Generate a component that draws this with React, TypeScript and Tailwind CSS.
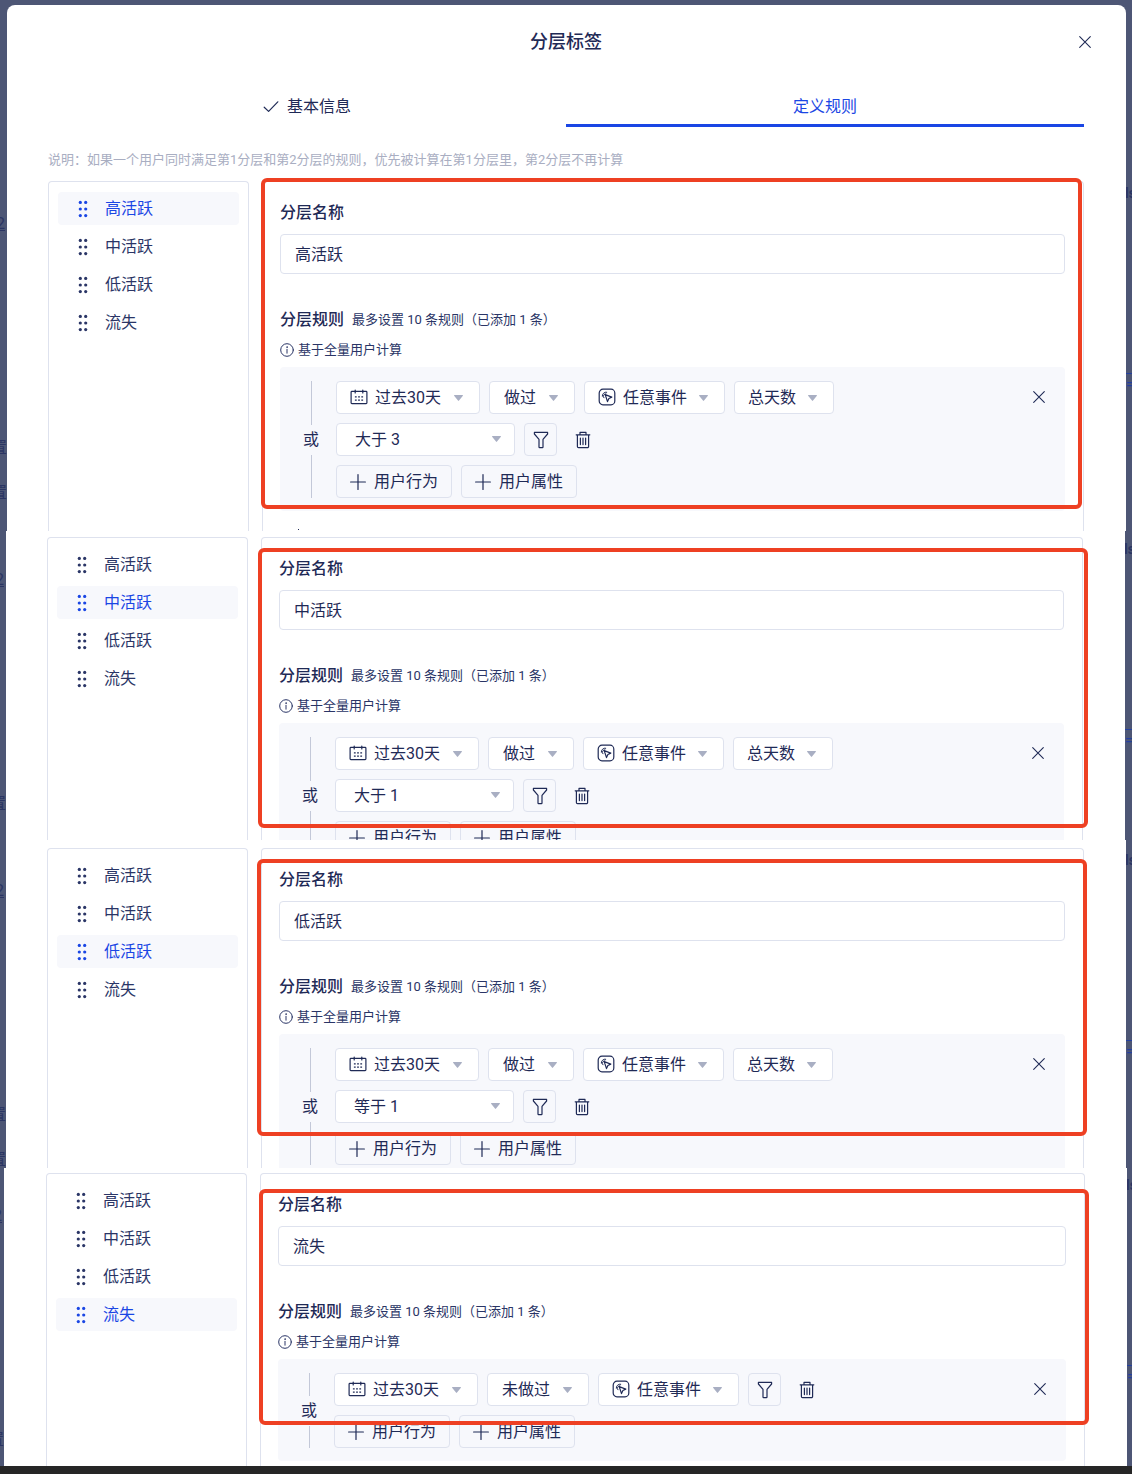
import React from "react";

type IconProps = { className?: string };

const strokeProps = {
  fill: "none",
  stroke: "currentColor",
  strokeLinecap: "round" as const,
  strokeLinejoin: "round" as const,
};

const CloseIcon = ({ className }: IconProps) => (
  <svg viewBox="0 0 14 14" className={className} {...strokeProps} strokeWidth="1.1" aria-hidden="true">
    <path d="M1.7 1.7l10.6 10.6M12.3 1.7L1.7 12.3" />
  </svg>
);

const CheckIcon = ({ className }: IconProps) => (
  <svg viewBox="0 0 16 16" className={className} {...strokeProps} strokeWidth="1.2" aria-hidden="true">
    <path d="M1.2 8.2l4.4 4.2L14.8 2.8" />
  </svg>
);

const DragIcon = ({ className }: IconProps) => (
  <svg viewBox="0 0 10 18" className={className} fill="currentColor" aria-hidden="true">
    {[2.4, 9, 15.6].map((y) => (
      <g key={y}>
        <circle cx="2.3" cy={y} r="1.6" />
        <circle cx="7.7" cy={y} r="1.6" />
      </g>
    ))}
  </svg>
);

const InfoIcon = ({ className }: IconProps) => (
  <svg viewBox="0 0 14 14" className={className} {...strokeProps} strokeWidth="1" aria-hidden="true">
    <circle cx="7" cy="7" r="6.3" />
    <path d="M7 6.3v3.9" />
    <circle cx="7" cy="4.1" r="0.3" />
  </svg>
);

const CalendarIcon = ({ className }: IconProps) => (
  <svg viewBox="0 0 18 18" className={className} {...strokeProps} strokeWidth="1.2" aria-hidden="true">
    <rect x="1.1" y="3.4" width="15.8" height="12.2" rx="0.8" />
    <path d="M5.2 2v3M12.8 2v3" />
    <path strokeLinecap="butt" strokeDasharray="1.8 1.4" d="M4.9 8.9h8.2M4.9 12.2h8.2" />
  </svg>
);

const EventIcon = ({ className }: IconProps) => (
  <svg viewBox="0 0 18 18" className={className} {...strokeProps} strokeWidth="1.2" aria-hidden="true">
    <rect x="1.2" y="1.2" width="15.6" height="15.6" rx="3.8" />
    <path d="M7.2 6.6l6.6 2.5-2.9 1.4-1.4 3.1z" />
    <path d="M4.3 8.2a3.6 3.6 0 0 1 4.4-4M5.9 9.8a2.3 2.3 0 0 1-.2-2.6 2.3 2.3 0 0 1 2.2-1.4" strokeWidth="1" />
  </svg>
);

const FilterIcon = ({ className }: IconProps) => (
  <svg viewBox="0 0 18 18" className={className} {...strokeProps} strokeWidth="1.2" aria-hidden="true">
    <path d="M2.4 1.4h13.2v1.6L11 8.4v7.6a.6.6 0 0 1-.6.6H7.6a.6.6 0 0 1-.6-.6V8.4L2.4 3z" />
  </svg>
);

const TrashIcon = ({ className }: IconProps) => (
  <svg viewBox="0 0 18 18" className={className} {...strokeProps} strokeWidth="1.2" aria-hidden="true">
    <path d="M2.2 3.8h13.6M6 3.6V1.4h6v2.2M3.4 4v11.4a1.2 1.2 0 0 0 1.2 1.2h8.8a1.2 1.2 0 0 0 1.2-1.2V4M6.4 7v6.6M9 7v6.6M11.6 7v6.6" />
  </svg>
);

const PlusIcon = ({ className }: IconProps) => (
  <svg viewBox="0 0 16 16" className={className} {...strokeProps} strokeWidth="1.2" aria-hidden="true">
    <path d="M8 .6v14.8M.6 8h14.8" />
  </svg>
);

const CaretIcon = ({ className }: IconProps) => (
  <svg viewBox="0 0 9 6" className={className} fill="currentColor" aria-hidden="true">
    <path d="M.7 0h7.6a.5.5 0 0 1 .4.9L5 5.6a.6.6 0 0 1-1 0L.3.9A.5.5 0 0 1 .7 0z" />
  </svg>
);

type DropdownProps = {
  label: string;
  value: string;
  width: string;
  textPad: string;
  caret?: string;
  icon?: React.ReactNode;
};

function Dropdown({ label, value, width, textPad, caret = "top-[14px] right-[17px]", icon }: DropdownProps) {
  return (
    <div className={`relative ${width}`}>
      {icon && <span className="pointer-events-none absolute top-[7px] left-[14px]">{icon}</span>}
      <select
        aria-label={label}
        defaultValue={value}
        className={`h-[33px] w-full appearance-none rounded border border-[#dee2ee] bg-white pr-0 text-base leading-6 ${textPad}`}
      >
        <option>{value}</option>
      </select>
      <CaretIcon className={`pointer-events-none absolute h-[6px] w-[9px] text-[#a9afc3] ${caret}`} />
    </div>
  );
}

const FilterButton = () => (
  <button type="button" aria-label="筛选" className="flex size-[33px] items-center justify-center rounded border border-[#dee2ee]">
    <FilterIcon className="size-[18px]" />
  </button>
);

const TrashButton = () => (
  <button type="button" aria-label="删除" className="flex size-[33px] items-center justify-center">
    <TrashIcon className="size-[18px]" />
  </button>
);

const AddButton = ({ children }: { children: React.ReactNode }) => (
  <button type="button" className="flex h-[33px] items-center gap-2 rounded border border-[#dee2ee] px-[13px] text-base leading-6">
    <PlusIcon className="size-4" />
    {children}
  </button>
);

const levels = ["高活跃", "中活跃", "低活跃", "流失"];

type Level = { name: string; done: string; compare?: string };

function LevelList({ active }: { active: string }) {
  return (
    <nav aria-label="分层" className="w-[201px] shrink-0 rounded-t border border-b-0 border-[#dee2ee] px-[9px] pt-[10px]">
      <ul className="flex flex-col gap-[5px]">
        {levels.map((l) => (
          <li key={l}>
            <button
              type="button"
              className={`flex h-[33px] w-full items-center gap-[17px] rounded pl-5 text-base leading-6 ${
                l === active ? "bg-[#f7f8fc] text-[#1a46e4]" : "text-[#2a3566]"
              }`}
            >
              <DragIcon className="h-[18px] w-[10px]" />
              {l}
            </button>
          </li>
        ))}
      </ul>
    </nav>
  );
}

function RuleBox({ level }: { level: Level }) {
  return (
    <div className="mt-[7px] flex rounded bg-[#f7f8fc] pt-[14px] pr-[19px] pb-[13px] pl-[23px]">
      <div className="mr-[17px] flex w-4 flex-col items-center">
        <span className="w-px flex-1 bg-[#c3c8d8]" />
        <span className="py-[3px] text-base leading-6">或</span>
        <span className="w-px flex-1 bg-[#c3c8d8]" />
      </div>
      <div className="flex flex-1 flex-col gap-[9px]">
        <div className="flex gap-[9px]">
          <Dropdown label="时间范围" value="过去30天" width="w-36" textPad="pl-[38px]" icon={<CalendarIcon className="size-[18px]" />} />
          <Dropdown label="是否做过" value={level.done} width={level.compare ? "w-[86px]" : "w-[102px]"} textPad="pl-[14px]" />
          <Dropdown label="事件" value="任意事件" width="w-[141px]" textPad="pl-[38px]" icon={<EventIcon className="size-[18px]" />} />
          {level.compare ? (
            <Dropdown label="指标" value="总天数" width="w-[100px]" textPad="pl-[13px]" />
          ) : (
            <>
              <FilterButton />
              <TrashButton />
            </>
          )}
        </div>
        {level.compare && (
          <div className="flex gap-[9px]">
            <Dropdown label="比较" value={level.compare} width="w-[179px]" textPad="pl-[18px]" caret="top-[13px] right-[14px]" />
            <FilterButton />
            <TrashButton />
          </div>
        )}
        <div className="flex gap-[9px]">
          <AddButton>用户行为</AddButton>
          <AddButton>用户属性</AddButton>
        </div>
      </div>
      <button type="button" aria-label="移除规则" className="mt-[9px] flex size-[14px] items-center justify-center self-start">
        <CloseIcon className="size-[14px]" />
      </button>
    </div>
  );
}

function LevelPanels({ level, frame, tail }: { level: Level; frame: string; tail?: boolean }) {
  const id = `name-${level.name}`;
  return (
    <div className="flex flex-1 gap-[13px]">
      <LevelList active={level.name} />
      <section className="relative flex-1 rounded-t border border-b-0 border-[#dee2ee] pt-[19px] pr-[18px] pl-[17px]">
        <label htmlFor={id} className="block text-base leading-6 font-medium">
          分层名称
        </label>
        <input
          id={id}
          defaultValue={level.name}
          className="mt-[9px] block h-10 w-full rounded border border-[#dee2ee] bg-white px-[14px] pb-[3px] text-base leading-6"
        />
        <div className="mt-[34px] flex items-center gap-2">
          <h2 className="text-base leading-6 font-medium">分层规则</h2>
          <span className="text-[13px] leading-5 text-[#2a3566]">最多设置 10 条规则（已添加 1 条）</span>
        </div>
        <p className="mt-2 flex items-center gap-1 text-[13px] leading-5 text-[#2a3566]">
          <InfoIcon className="size-[14px]" />
          基于全量用户计算
        </p>
        <RuleBox level={level} />
        {tail && <div className="mt-[18px] ml-[18px] size-px bg-[#1f2a56]" />}
        <div className={`pointer-events-none absolute rounded-md border-4 border-[#ee4023] ${frame}`} />
      </section>
    </div>
  );
}

/* Slivers of the dimmed page that stay visible beside the dialog. */
const LeftGutter = ({ className }: { className: string }) => (
  <div aria-hidden="true" className={`flex shrink-0 flex-col items-end overflow-hidden text-base leading-5 text-[#2b3563] ${className}`}>
    <span className="mt-[33px] mr-[2px] underline">2</span>
    <span className="mt-[204px]">置</span>
    <span className="mt-[25px]">置</span>
  </div>
);

const RightGutter = ({ className }: { className: string }) => (
  <div aria-hidden="true" className={`shrink-0 overflow-hidden text-sm leading-5 text-[#2b3563] ${className}`}>
    <span className="mt-[2px] -ml-px block font-bold">ls</span>
    <span className="mt-[170px] block h-5 border-t border-[#24409f] text-[#24409f]">=</span>
  </div>
);

export default function App() {
  return (
    <div className="bg-[#4d5675] font-[Roboto,'Noto_Sans_CJK_SC',sans-serif] text-[#1f2a56]">
      <div className="flex h-[531px] overflow-hidden">
        <LeftGutter className="w-[7px] pt-[181px]" />
        <main className="mt-[5px] flex min-w-0 flex-1 flex-col rounded-t-lg bg-white pr-[42px] pl-[41px]">
          <header className="relative flex h-[73px] shrink-0 items-center justify-center">
            <h1 className="text-lg leading-6 font-medium">分层标签</h1>
            <button type="button" aria-label="关闭" className="absolute right-[-8px]">
              <CloseIcon className="size-[14px]" />
            </button>
          </header>
          <div role="tablist" className="mt-2 grid h-[41px] shrink-0 grid-cols-2 text-base leading-6">
            <button type="button" role="tab" aria-selected="false" className="flex items-center justify-center gap-2 border-b-[3px] border-transparent pt-[3px]">
              <CheckIcon className="size-4" />
              基本信息
            </button>
            <button type="button" role="tab" aria-selected="true" className="flex items-center justify-center border-b-[3px] border-[#1a46e4] pt-[3px] text-[#1a46e4]">
              定义规则
            </button>
          </div>
          <p className="mt-[23px] mb-[11px] text-[13px] leading-5 text-[#a9aec2]">
            说明：如果一个用户同时满足第1分层和第2分层的规则，优先被计算在第1分层里，第2分层不再计算
          </p>
          <LevelPanels level={{ name: "高活跃", done: "做过", compare: "大于 3" }} frame="-top-1 right-px -left-[2px] h-[331px]" tail />
        </main>
        <RightGutter className="w-[6px] pt-[181px]" />
      </div>

      <div className="flex h-[309px] overflow-hidden">
        <LeftGutter className="w-[6px] pt-[6px]" />
        <main className="flex min-w-0 flex-1 bg-white pt-[6px] pr-[42px] pl-[41px]">
          <LevelPanels level={{ name: "中活跃", done: "做过", compare: "大于 1" }} frame="top-[10px] -right-[6px] -left-1 h-[280px]" />
        </main>
        <RightGutter className="w-[7px] pt-[6px]" />
      </div>

      <div className="flex h-[328px] overflow-hidden">
        <LeftGutter className="w-[6px] pt-2" />
        <main className="flex min-w-0 flex-1 bg-white pt-2 pr-[42px] pl-[41px]">
          <LevelPanels level={{ name: "低活跃", done: "做过", compare: "等于 1" }} frame="top-[10px] -right-1 -left-[5px] h-[277px]" />
        </main>
        <RightGutter className="w-[6px] pt-2" />
      </div>

      <div className="flex h-[298px] overflow-hidden">
        <LeftGutter className="w-1 pt-[5px]" />
        <main className="flex min-w-0 flex-1 bg-white pt-[5px] pr-[42px] pl-[42px]">
          <LevelPanels level={{ name: "流失", done: "未做过" }} frame="top-[15px] -right-[5px] -left-[2px] h-[236px]" />
        </main>
        <RightGutter className="w-[5px] pt-[5px]" />
      </div>
      <div className="h-2 bg-[#262626]" />
    </div>
  );
}
